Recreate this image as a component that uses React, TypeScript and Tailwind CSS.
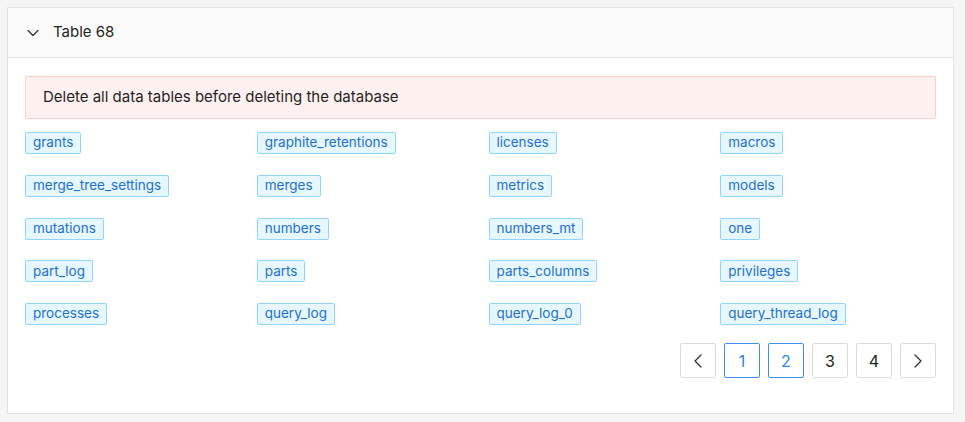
import { ChevronDown, ChevronLeft, ChevronRight } from 'lucide-react';

const tables = [
  'grants',
  'graphite_retentions',
  'licenses',
  'macros',
  'merge_tree_settings',
  'merges',
  'metrics',
  'models',
  'mutations',
  'numbers',
  'numbers_mt',
  'one',
  'part_log',
  'parts',
  'parts_columns',
  'privileges',
  'processes',
  'query_log',
  'query_log_0',
  'query_thread_log',
];

const pages = [
  { label: '1', active: true },
  { label: '2', active: true },
  { label: '3', active: false },
  { label: '4', active: false },
];

export default function App() {
  return (
    <div
      className="min-h-[422px] bg-[#f5f5f5] pl-[7px] pt-[7px] pb-[9px]"
      style={{ fontFamily: 'Inter, "Noto Sans", sans-serif' }}
    >
      <div className="w-[947px] border border-[#e3e3e3] bg-white">
        {/* Header */}
        <div className="flex h-[50px] items-center gap-[10px] border-b border-[#e3e3e3] bg-[#fafafa] pl-[15px]">
          <ChevronDown className="h-[20px] w-[20px] text-[#333]" strokeWidth={1.5} />
          <span className="text-[15px] text-[#1f1f1f]">Table 68</span>
        </div>

        <div className="px-[17px] pt-[18px] pb-[35px]">
          {/* Alert */}
          <div className="flex h-[43px] items-center rounded-[2px] border border-[#ffccc7] bg-[#fff1f0] px-[17px] text-[15px] text-[#1f1f1f]">
            Delete all data tables before deleting the database
          </div>

          {/* Tables */}
          <div className="mt-[13px] grid grid-cols-4 gap-x-4 gap-y-[20.75px]">
            {tables.map((name) => (
              <div key={name} className="flex h-[22px]">
                <span className="inline-flex h-[22px] items-center rounded-[2px] border border-[#91d5ff] bg-[#e6f7ff] px-[7px] text-[13.5px] leading-none text-[#1d6fd6]">
                  {name}
                </span>
              </div>
            ))}
          </div>

          {/* Pagination */}
          <div className="mt-[18px] flex justify-end gap-2">
            <button className="flex h-[35px] w-9 items-center justify-center rounded-[2px] border border-[#dcdcdc] bg-white text-[#333]">
              <ChevronLeft className="h-[24px] w-[24px]" strokeWidth={1.3} />
            </button>
            {pages.map((p) => (
              <button
                key={p.label}
                className={
                  p.active
                    ? 'flex h-[35px] w-9 items-center justify-center rounded-[2px] border border-[#3d8ef0] bg-white text-[16px] text-[#2a83ee]'
                    : 'flex h-[35px] w-9 items-center justify-center rounded-[2px] border border-[#dcdcdc] bg-white text-[16px] text-[#222]'
                }
              >
                {p.label}
              </button>
            ))}
            <button className="flex h-[35px] w-9 items-center justify-center rounded-[2px] border border-[#dcdcdc] bg-white text-[#333]">
              <ChevronRight className="h-[24px] w-[24px]" strokeWidth={1.3} />
            </button>
          </div>
        </div>
      </div>
    </div>
  );
}
